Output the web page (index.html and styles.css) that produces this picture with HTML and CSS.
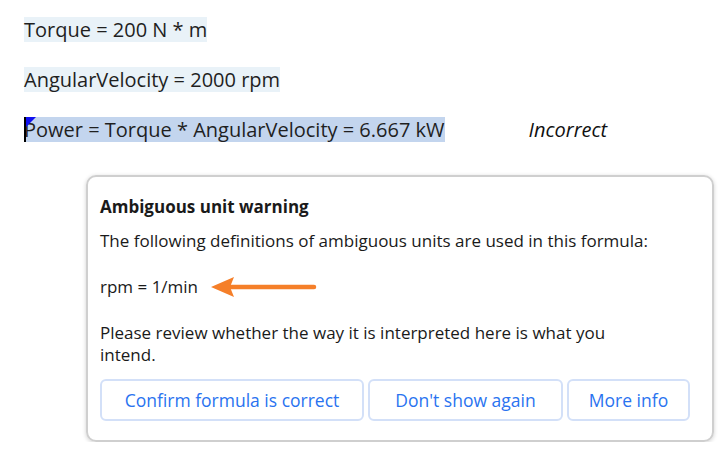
FILE: index.html
```html
<!DOCTYPE html>
<html>
<head>
<meta charset="utf-8">
<link rel="stylesheet" href="styles.css">
</head>
<body>
<div class="sheet">
  <div class="row"><span class="def">Torque = 200 N * m</span></div>
  <div class="row"><span class="def">AngularVelocity = 2000 rpm</span></div>
  <div class="row">
    <span class="def sel"><span class="caret"></span>Power = Torque * AngularVelocity = 6.667 kW</span>
    <span class="status">Incorrect</span>
  </div>
  <div class="card">
    <div class="title">Ambiguous unit warning</div>
    <p class="text">The following definitions of ambiguous units are used in this formula:</p>
    <div class="unit">
      <span>rpm = 1/min</span>
      <svg class="arrow" width="108" height="22" viewBox="0 0 108 22">
        <path d="M20 11 H104" stroke="#f57f29" stroke-width="4.5" stroke-linecap="round" fill="none"/>
        <path d="M1 11 L24 1 L20 11 L24 21 Z" fill="#f57f29"/>
      </svg>
    </div>
    <p class="text review">Please review whether the way it is interpreted here is what you intend.</p>
    <div class="buttons">
      <button class="btn b1">Confirm formula is correct</button>
      <button class="btn b2">Don't show again</button>
      <button class="btn b3">More info</button>
    </div>
  </div>
</div>
</body>
</html>
```

FILE: styles.css
```css
html, body {
  margin: 0;
  padding: 0;
  background: #ffffff;
}
.sheet {
  padding: 17px 0 0 24px;
  font-family: "Open Sans", "Noto Sans", sans-serif;
  color: #1f1f1f;
}
.row {
  display: flex;
  align-items: center;
  height: 25px;
  margin-bottom: 25px;
}
.def {
  position: relative;
  display: inline-block;
  height: 25px;
  line-height: 25px;
  font-size: 20px;
  background: #e9f2f8;
}
.def.sel {
  background: #c3d5ee;
}
.caret {
  position: absolute;
  left: 0;
  top: 0;
  width: 2px;
  height: 25px;
  background: #000;
}
.caret::after {
  content: "";
  position: absolute;
  left: 2px;
  top: 0;
  border-top: 10px solid #1010f0;
  border-right: 10px solid transparent;
}
.status {
  margin-left: 84px;
  font-style: italic;
  font-size: 20px;
  font-family: "Open Sans", sans-serif;
  color: #111;
}
.card {
  margin: 33px 0 0 62px;
  width: 600px;
  padding: 19px 12px 19px 12px;
  border: 2px solid #cfcfcf;
  border-radius: 10px;
  box-shadow: 0 1px 4px rgba(0,0,0,0.18);
  font-size: 17px;
  color: #1a1a1a;
}
.title {
  font-weight: 700;
  line-height: 22px;
  margin-bottom: 12px;
}
.text {
  margin: 0;
  line-height: 22px;
}
.unit {
  display: flex;
  align-items: center;
  gap: 12px;
  margin: 24px 0 24px 0;
  line-height: 22px;
}
.arrow {
  display: block;
}
.review {
  max-width: 550px;
  margin-bottom: 13px;
}
.buttons {
  display: flex;
  gap: 4px;
}
.btn {
  height: 42px;
  border: 2px solid #d3e0f8;
  border-radius: 6px;
  background: #fff;
  color: #2a73f0;
  font-family: "Open Sans", sans-serif;
  font-size: 17.5px;
  padding: 0;
}
.b1 { width: 264px; }
.b2 { width: 195px; }
.b3 { width: 123px; }
```
